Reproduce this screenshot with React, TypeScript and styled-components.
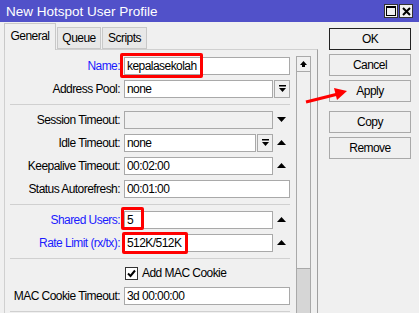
import React from 'react';
import styled, { createGlobalStyle } from 'styled-components';

const GlobalStyle = createGlobalStyle`
  html, body {
    margin: 0;
    padding: 0;
    background: #f0f0f0;
  }
`;

const Window = styled.div`
  position: relative;
  width: 419px;
  height: 313px;
  overflow: hidden;
  background: #f0f0f0;
  font-family: "Liberation Sans", Arial, sans-serif;
  font-size: 12px;
  letter-spacing: -0.55px;
  color: #000;
`;

const TitleBar = styled.div`
  height: 22px;
  background: #5151c9;
  display: flex;
  align-items: center;
  justify-content: space-between;
  padding: 0 6px;
  color: #fff;
  font-size: 13.5px;
  letter-spacing: 0;
`;

const TitleButtons = styled.div`
  display: flex;
  gap: 1px;
`;

const TitleButton = styled.div`
  width: 14px;
  height: 14px;
  background: #f0f0f0;
  border: 1px solid #333;
  box-sizing: border-box;
  display: flex;
  align-items: center;
  justify-content: center;
`;

const Body = styled.div`
  display: flex;
  height: 291px;
`;

const TabArea = styled.div`
  width: 314px;
  margin-left: 4px;
  display: flex;
  flex-direction: column;
`;

const TabRow = styled.div`
  height: 27px;
  display: flex;
  align-items: flex-end;
  gap: 1px;
`;

const Tab = styled.div<{ $active?: boolean; $w: number }>`
  width: ${(p) => p.$w}px;
  height: ${(p) => (p.$active ? 27 : 22)}px;
  margin-bottom: ${(p) => (p.$active ? -1 : 0)}px;
  box-sizing: border-box;
  border: 1px solid #c8c8c8;
  border-bottom: ${(p) => (p.$active ? 'none' : '1px solid #c8c8c8')};
  background: ${(p) => (p.$active ? '#f0f0f0' : '#e8e8e8')};
  position: relative;
  z-index: ${(p) => (p.$active ? 2 : 1)};
  display: flex;
  align-items: center;
  justify-content: center;
  padding-bottom: ${(p) => (p.$active ? 3 : 0)}px;
`;

const Panel = styled.div`
  flex: 1;
  display: flex;
  border-top: 1px solid #d0d0d0;
  border-left: 1px solid #d0d0d0;
  border-right: 1px solid #a0a0a0;
  padding: 6px 6px 0 5px;
  gap: 6px;
  overflow: hidden;
`;

const Form = styled.div`
  width: 280px;
  margin-top: 1px;
  display: flex;
  flex-direction: column;
  gap: 5px;
`;

const Row = styled.div`
  height: 18px;
  display: grid;
  grid-template-columns: 110px 166px;
  column-gap: 4px;
  align-items: center;
`;

const Label = styled.div<{ $blue?: boolean }>`
  text-align: right;
  white-space: nowrap;
  color: ${(p) => (p.$blue ? '#1b1bff' : '#000')};
`;

const Field = styled.div`
  position: relative;
  display: flex;
  height: 18px;
  align-items: stretch;
`;

const Input = styled.div<{ $disabled?: boolean }>`
  flex: 1;
  box-sizing: border-box;
  height: 18px;
  border: 1px solid #a9a9a9;
  background: ${(p) => (p.$disabled ? '#f0f0f0' : '#fff')};
  padding: 0 2px;
  line-height: 16px;
  white-space: nowrap;
  overflow: hidden;
`;

const DropButton = styled.div`
  width: 16px;
  margin-left: 1px;
  box-sizing: border-box;
  border: 1px solid #a9a9a9;
  background: #f0f0f0;
  display: flex;
  align-items: center;
  justify-content: center;
`;

const ArrowCell = styled.div`
  width: 17px;
  display: flex;
  align-items: center;
  justify-content: center;
`;

const Highlight = styled.div<{ $l: number; $t: number; $w: number; $h: number }>`
  position: absolute;
  left: ${(p) => p.$l}px;
  top: ${(p) => p.$t}px;
  width: ${(p) => p.$w}px;
  height: ${(p) => p.$h}px;
  box-sizing: border-box;
  border: 3px solid #ff0000;
  border-radius: 2px;
  pointer-events: none;
`;

const Divider = styled.div`
  height: 1px;
  background: #d0d0d0;
  margin: 1px 0;
`;

const CheckRow = styled.div`
  height: 18px;
  display: flex;
  align-items: center;
  padding-left: 115px;
  gap: 4px;
`;

const CheckBox = styled.div`
  width: 13px;
  height: 13px;
  box-sizing: border-box;
  border: 1px solid #333;
  background: #fff;
  display: flex;
  align-items: center;
  justify-content: center;
`;

const ScrollBar = styled.div`
  width: 15px;
  display: flex;
  flex-direction: column;
`;

const ScrollButton = styled.div`
  height: 16px;
  box-sizing: border-box;
  border: 1px solid #a9a9a9;
  background: #f0f0f0;
  display: flex;
  align-items: center;
  justify-content: center;
`;

const ScrollThumb = styled.div`
  height: 197px;
  box-sizing: border-box;
  border: 1px solid #a9a9a9;
  border-top: none;
  background: #f0f0f0;
`;

const ScrollTrack = styled.div`
  flex: 1;
  background: #d6d6d6;
  border-left: 1px solid #a9a9a9;
  border-right: 1px solid #a9a9a9;
`;

const ButtonColumn = styled.div`
  margin-left: 11px;
  padding-top: 6px;
  display: flex;
  flex-direction: column;
  gap: 4px;
`;

const Button = styled.div<{ $default?: boolean; $space?: boolean }>`
  width: 82px;
  height: 22px;
  box-sizing: border-box;
  border: 1px solid ${(p) => (p.$default ? '#222' : '#a9a9a9')};
  background: #f0f0f0;
  display: flex;
  align-items: center;
  justify-content: center;
  margin-top: ${(p) => (p.$space ? 5 : 0)}px;
`;

const Annotation = styled.svg`
  position: absolute;
  left: 300px;
  top: 84px;
  pointer-events: none;
`;

const TriUp = () => (
  <svg width="9" height="6" viewBox="0 0 9 6">
    <polygon points="0,5 4.5,0 9,5" fill="#000" />
  </svg>
);

const TriDown = () => (
  <svg width="9" height="6" viewBox="0 0 9 6">
    <polygon points="0,0 4.5,5 9,0" fill="#000" />
  </svg>
);

const DropGlyph = () => (
  <svg width="9" height="8" viewBox="0 0 9 8">
    <rect x="1" y="0" width="7" height="1.5" fill="#000" />
    <polygon points="1,3 4.5,7 8,3" fill="#000" />
  </svg>
);

const ScrollUpGlyph = () => (
  <svg width="9" height="8" viewBox="0 0 9 8">
    <polygon points="1,5 4.5,1 8,5" fill="#000" />
    <rect x="3" y="5" width="3" height="2" fill="#000" />
  </svg>
);

type FieldRowProps = {
  label: string;
  value?: string;
  blue?: boolean;
  disabled?: boolean;
  drop?: boolean;
  arrow?: 'up' | 'down';
  mark?: { l: number; t: number; w: number; h: number };
};

const FieldRow = ({ label, value, blue, disabled, drop, arrow, mark }: FieldRowProps) => (
  <Row>
    <Label $blue={blue}>{label}</Label>
    <Field>
      <Input $disabled={disabled}>{value}</Input>
      {drop && (
        <DropButton>
          <DropGlyph />
        </DropButton>
      )}
      {arrow && <ArrowCell>{arrow === 'up' ? <TriUp /> : <TriDown />}</ArrowCell>}
      {mark && <Highlight $l={mark.l} $t={mark.t} $w={mark.w} $h={mark.h} />}
    </Field>
  </Row>
);

export default function App() {
  return (
    <>
      <GlobalStyle />
      <Window>
        <TitleBar>
          <span>New Hotspot User Profile</span>
          <TitleButtons>
            <TitleButton>
              <svg width="10" height="10" viewBox="0 0 10 10">
                <rect x="0.5" y="0.5" width="9" height="9" fill="none" stroke="#000" />
                <rect x="0" y="0" width="10" height="2" fill="#000" />
              </svg>
            </TitleButton>
            <TitleButton>
              <svg width="9" height="9" viewBox="0 0 9 9">
                <path d="M1 1 L8 8 M8 1 L1 8" stroke="#000" strokeWidth="2" />
              </svg>
            </TitleButton>
          </TitleButtons>
        </TitleBar>
        <Body>
          <TabArea>
            <TabRow>
              <Tab $active $w={52}>General</Tab>
              <Tab $w={44}>Queue</Tab>
              <Tab $w={45}>Scripts</Tab>
            </TabRow>
            <Panel>
              <Form>
                <FieldRow label="Name:" value="kepalasekolah" blue mark={{ l: -4, t: -4, w: 83, h: 25 }} />
                <FieldRow label="Address Pool:" value="none" drop />
                <Divider />
                <FieldRow label="Session Timeout:" disabled arrow="down" />
                <FieldRow label="Idle Timeout:" value="none" drop arrow="up" />
                <FieldRow label="Keepalive Timeout:" value="00:02:00" arrow="up" />
                <FieldRow label="Status Autorefresh:" value="00:01:00" />
                <Divider />
                <FieldRow label="Shared Users:" value="5" blue arrow="up" mark={{ l: -3, t: -4, w: 23, h: 23 }} />
                <FieldRow label="Rate Limit (rx/tx):" value="512K/512K" blue arrow="up" mark={{ l: -2, t: -2, w: 66, h: 22 }} />
                <Divider />
                <CheckRow>
                  <CheckBox>
                    <svg width="9" height="9" viewBox="0 0 9 9">
                      <path d="M1 4.5 L3.5 7 L8 1.5" stroke="#000" strokeWidth="2" fill="none" />
                    </svg>
                  </CheckBox>
                  <span>Add MAC Cookie</span>
                </CheckRow>
                <FieldRow label="MAC Cookie Timeout:" value="3d 00:00:00" />
                <Divider />
              </Form>
              <ScrollBar>
                <ScrollButton>
                  <ScrollUpGlyph />
                </ScrollButton>
                <ScrollThumb />
                <ScrollTrack />
              </ScrollBar>
            </Panel>
          </TabArea>
          <ButtonColumn>
            <Button $default>OK</Button>
            <Button>Cancel</Button>
            <Button>Apply</Button>
            <Button $space>Copy</Button>
            <Button>Remove</Button>
          </ButtonColumn>
        </Body>
        <Annotation width="50" height="22" viewBox="0 0 50 22">
          <line x1="6" y1="18" x2="38" y2="10" stroke="#ff0000" strokeWidth="3" />
          <polygon points="47,7 34,4 37,16" fill="#ff0000" />
        </Annotation>
      </Window>
    </>
  );
}
